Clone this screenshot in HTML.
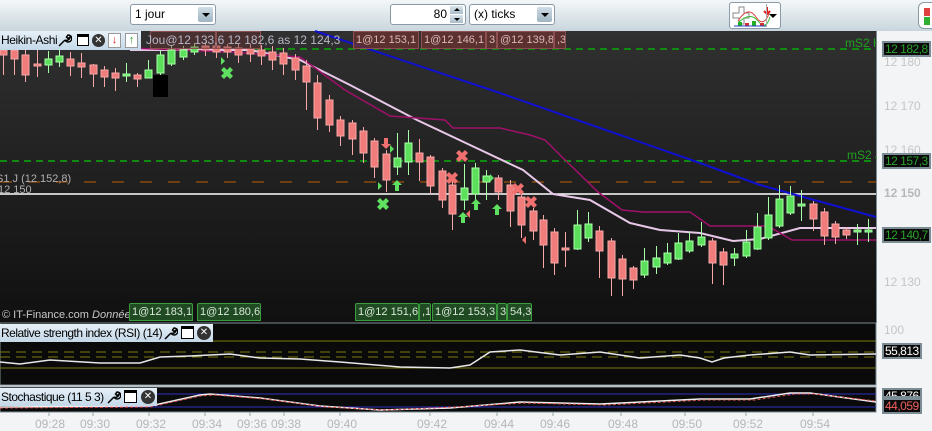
<!DOCTYPE html>
<html><head><meta charset="utf-8"><style>
*{margin:0;padding:0;box-sizing:border-box}
body{width:932px;height:429px;overflow:hidden;background:#f2f4f5;font-family:"Liberation Sans",sans-serif;position:relative}
.abs{position:absolute}
.tb{left:0;top:0;width:932px;height:31px;background:linear-gradient(#f4f7f8,#c9d6dd)}
.dd{background:#fff;border:1px solid #8a9aa6;border-radius:3px;font-size:12px;color:#000;height:21px;top:4px;line-height:19px;padding-left:4px}
.btn{position:absolute;right:2px;top:2px;width:15px;height:15px;background:linear-gradient(#cfdde6,#9fb4c2);border-radius:2px}
.btn:after{content:"";position:absolute;left:4px;top:6px;border-left:4px solid transparent;border-right:4px solid transparent;border-top:4px solid #000}
.hdr{background:linear-gradient(#e6f0f8,#c4d8e8);font-size:11px;color:#000;line-height:18px;padding-left:1px;white-space:nowrap}
.lbl{font-size:11px;line-height:16px;height:18px;padding:0 2px;white-space:nowrap;overflow:hidden}
.rl{background:rgba(110,50,50,.75);border:1px solid #8c5050;color:#d9b8b8;top:31px}
.gl{background:#1f4a22;border:1px solid #3c9a3f;color:#d8e8d8;top:303px;border-radius:2px 2px 0 0}
.ax{font-size:12px;color:#c6c6c6;left:884px;white-space:nowrap}
.vb{left:882px;background:#0a0a0a;border:2px solid #7c8c94;font-size:12px;line-height:12px;padding:0 1px;color:#2aa02a;white-space:nowrap;letter-spacing:-0.5px}
.t{font-size:12px;color:#b6b6b6;top:417px}
.wr{position:absolute;width:14px;height:14px}
</style></head><body>
<div class="abs tb"></div>
<div class="abs dd" style="left:130px;width:86px">1 jour<div class="btn"></div></div>
<div class="abs dd" style="left:390px;width:76px;text-align:right;padding-right:18px">80<div class="abs" style="right:2px;top:1px;width:13px;height:8px;background:linear-gradient(#d8e4ea,#aabdc9)"></div><div class="abs" style="right:2px;top:10px;width:13px;height:8px;background:linear-gradient(#d8e4ea,#aabdc9)"></div><div class="abs" style="right:5px;top:3px;border-left:3px solid transparent;border-right:3px solid transparent;border-bottom:3px solid #000"></div><div class="abs" style="right:5px;top:13px;border-left:3px solid transparent;border-right:3px solid transparent;border-top:3px solid #000"></div></div>
<div class="abs dd" style="left:469px;width:86px">(x) ticks<div class="btn"></div></div>
<div class="abs" style="left:729px;top:2px;width:52px;height:27px;background:#fff;border:1px solid #8a9aa6;border-radius:3px">
<svg width="50" height="25"><path d="M3 10h6v-6h5v6h5v5h-5v6h-5v-6h-6z" fill="#fff" stroke="#888"/><path d="M8 18 Q18 2 26 14 T40 8" stroke="#e04040" fill="none"/><path d="M8 20 Q20 8 28 18 T40 14" stroke="#30c030" fill="none"/><rect x="8" y="19" width="4" height="4" fill="#20b020"/><rect x="22" y="18" width="4" height="5" fill="#20b020"/><rect x="15" y="20" width="4" height="3" fill="#d03030"/><rect x="30" y="20" width="4" height="3" fill="#d03030"/><path d="M4 23h32" stroke="#2040c0"/><path d="M37 4v6M34 8l3 3 3-3" stroke="#e02020" stroke-width="2" fill="none"/></svg></div>
<div class="abs" style="left:766px;top:4px;width:14px;height:23px;border-left:1px solid #aaa"></div>
<div class="abs" style="left:769px;top:14px;border-left:4px solid transparent;border-right:4px solid transparent;border-top:4px solid #000"></div>
<div class="abs" style="left:918px;top:2px;width:20px;height:27px;background:#fff;border:1px solid #8a9aa6;border-radius:6px"></div>
<div class="abs" style="left:924px;top:8px;width:6px;height:8px;background:#e04040"></div>
<div class="abs" style="left:924px;top:17px;width:6px;height:8px;background:#30b030"></div>

<svg class="abs" style="left:0;top:31px" width="877" height="292">
<defs><linearGradient id="bg" x1="0" y1="0" x2="0" y2="1"><stop offset="0" stop-color="#303030"/><stop offset="1" stop-color="#101010"/></linearGradient></defs>
<rect width="877" height="292" fill="url(#bg)"/>
<rect x="876" width="1" height="292" fill="#7c8c94"/>
</svg>
<svg class="abs" style="left:0;top:0" width="877" height="322">
<g stroke-width="2">
<line x1="0" y1="49" x2="876" y2="49" stroke="#108a10" stroke-dasharray="7 5"/>
<line x1="0" y1="161" x2="876" y2="161" stroke="#108a10" stroke-dasharray="7 5"/>
<line x1="0" y1="182" x2="876" y2="182" stroke="#8a4a10" stroke-width="1.5" stroke-dasharray="12 16"/>
</g>
<line x1="0" y1="194" x2="876" y2="194" stroke="#fff" stroke-width="1.5"/>
<polyline points="315,31 500,93 700,163 760,185 876,217" fill="none" stroke="#1010d0" stroke-width="2"/>
<polyline points="130,50 250,50 300,60 350,85 417,120 470,145 523,170 553,194 590,200 630,223 660,230 700,233 733,241 760,239 800,228 876,228" fill="none" stroke="#e8c8e8" stroke-width="2"/>
<polyline points="130,48 230,52 300,57 345,90 390,116 445,120 453,128 500,128 530,135 545,140 560,155 598,192 622,210 643,212 690,212 710,226 768,226 792,240 876,240" fill="none" stroke="#a0106a" stroke-width="1.5"/>
<rect x="153" y="75" width="15" height="22" fill="#000"/>
<g id="c" stroke-width="1"></g>
<g font-size="12" fill="#20a020"><text x="845" y="47">mS2 H</text><text x="847" y="159">mS2 J</text></g>
<text x="-4" y="182" font-size="11" fill="#b0b0b0">S1 J (12 152,8)</text>
<text x="-2" y="193" font-size="11" fill="#b0b0b0">12 150</text>
<text x="2" y="318" font-size="11" fill="#c8c8c8">© IT-Finance.com <tspan font-style="italic">Données indicatives</tspan></text>
<g fill="#60e060"><path d="M224 68l3 3 3-3 3 3-3 3 3 3-3 3-3-3-3 3-3-3 3-3-3-3z" transform="translate(0,-1)"/><path d="M380 198l3 3 3-3 3 3-3 3 3 3-3 3-3-3-3 3-3-3 3-3-3-3z"/>
<path d="M397 180l5 5h-3v6h-4v-6h-3z"/><path d="M463 212l5 5h-3v6h-4v-6h-3z"/><path d="M476 199l5 5h-3v6h-4v-6h-3z"/><path d="M497 204l5 5h-3v6h-4v-6h-3z"/>
<path d="M378 182v8l4-4z"/><path d="M390 145v8l4-4z"/><path d="M490 174v8l4-4z"/><path d="M221 57v8l4-4z"/></g>
<g fill="#f07070"><path d="M459 150l3 3 3-3 3 3-3 3 3 3-3 3-3-3-3 3-3-3 3-3-3-3z"/><path d="M449 172l3 3 3-3 3 3-3 3 3 3-3 3-3-3-3 3-3-3 3-3-3-3z"/><path d="M515 183l3 3 3-3 3 3-3 3 3 3-3 3-3-3-3 3-3-3 3-3-3-3z"/><path d="M528 196l3 3 3-3 3 3-3 3 3 3-3 3-3-3-3 3-3-3 3-3-3-3z"/>
<path d="M386 149l5-5h-3v-6h-4v6h-3z"/><path d="M526 236v8l-4-4z"/><path d="M470 210v8l-4-4z"/></g>
</svg>
<script>
var d=[["R",3,50,55,46,75],["R",14,50,59,46,75],["R",25,55,75,50,82],["R",37,64,66,50,77],["G",48,59,65,51,73],["G",59,56,62,50,67],["R",70,59,66,52,76],["R",81,63,67,53,78],["R",93,65,74,64,87],["R",104,70,77,66,87],["R",115,73,78,68,91],["G",126,74,76,63,82],["R",137,75,79,73,87],["G",148,70,78,60,78],["G",160,55,73,50,75],["G",171,50,64,45,66],["G",183,50,57,46,60],["G",194,47,52,43,55],["R",205,46,50,42,56],["R",216,46,52,42,58],["R",227,47,52,44,58],["R",238,48,55,44,63],["R",250,49,54,44,62],["R",261,50,56,45,65],["R",272,52,60,46,70],["R",283,53,64,48,75],["R",295,58,70,54,80],["R",306,66,82,60,110],["R",317,83,118,75,130],["R",329,100,125,95,132],["R",340,120,136,116,146],["R",352,123,139,120,155],["R",363,131,153,127,163],["R",374,141,167,138,178],["R",386,154,180,150,192],["G",397,158,167,133,175],["G",408,143,162,130,175],["R",419,153,162,139,181],["R",430,157,186,155,194],["R",442,171,200,168,208],["R",452,185,214,180,230],["G",464,188,200,164,210],["G",475,168,194,163,200],["G",486,176,182,170,200],["R",498,178,192,175,200],["R",510,185,211,180,227],["R",521,197,225,193,238],["R",533,211,231,208,240],["R",543,220,245,215,268],["R",554,232,263,228,275],["R",565,248,250,232,267],["G",577,225,249,210,250],["G",588,224,238,212,242],["R",599,231,251,226,278],["R",611,241,278,238,296],["R",622,259,279,255,296],["R",633,268,280,266,289],["G",644,261,275,248,278],["G",656,258,267,246,274],["G",667,253,263,243,265],["G",678,243,259,233,260],["G",689,241,251,232,253],["G",701,237,245,222,247],["R",712,241,263,238,284],["R",723,252,265,248,285],["G",734,254,258,248,266],["G",746,242,256,230,258],["G",757,227,249,213,250],["G",768,215,238,197,240],["G",779,199,226,185,228],["G",790,196,213,186,215],["G",801,204,206,190,221],["R",813,204,219,201,231],["R",824,212,236,208,245],["R",835,224,237,221,244],["R",846,230,235,227,239],["G",857,230,232,224,245],["G",868,230,232,219,242]];
var s="";d.forEach(function(c){var f=c[0]=="R"?"#f07c7c":"#5ce05c",k=c[0]=="R"?"#f8a8a8":"#a8ffa8";s+='<line x1="'+(c[1]+.5)+'" y1="'+c[4]+'" x2="'+(c[1]+.5)+'" y2="'+c[5]+'" stroke="'+k+'"/><rect x="'+(c[1]-3)+'" y="'+c[2]+'" width="7" height="'+Math.max(2,c[3]-c[2])+'" fill="'+f+'" stroke="'+k+'"/>';});
document.getElementById("c").innerHTML=s;
</script>
<div class="abs hdr" style="left:0;top:31px;width:141px;height:19px;font-size:12px;letter-spacing:-0.4px">Heikin-Ashi</div>
<svg class="wr" style="left:58px;top:33px" viewBox="0 0 14 14"><path d="M1 13l6-6M7 7a3.5 3.5 0 1 0 3-5l-1.5 2 1.5 1.5 2-1.5a3.5 3.5 0 0 1-5 3" fill="none" stroke="#000" stroke-width="1.5"/></svg>
<div class="abs" style="left:77px;top:34px;width:12px;height:12px;border:1px solid #000;border-top:3px solid #000;background:#fff"></div>
<div class="abs" style="left:92px;top:34px;width:13px;height:13px;border-radius:50%;background:#333;color:#fff;font-size:10px;line-height:13px;text-align:center">✕</div>
<div class="abs" style="left:108px;top:33px;width:13px;height:15px;background:#fff;border:1px solid #999;color:#e02020;font-size:11px;text-align:center;line-height:13px">↓</div>
<div class="abs" style="left:125px;top:33px;width:13px;height:15px;background:#fff;border:1px solid #999;color:#20a020;font-size:11px;text-align:center;line-height:13px;font-weight:bold">↑</div>
<div class="abs lbl rl" style="left:150px;width:66px;background:rgba(110,50,50,.4)"></div>
<div class="abs lbl rl" style="left:216px;width:45px;background:rgba(110,50,50,.4)"></div>
<div class="abs" style="left:146px;top:33px;font-size:12px;color:#b8b8c8;white-space:nowrap">Jou@12 133,6 12 182,6 as 12 124,3</div>
<div class="abs lbl rl" style="left:353px;width:66px">1@12 153,1</div>
<div class="abs lbl rl" style="left:421px;width:65px">1@12 146,1</div>
<div class="abs lbl rl" style="left:486px;width:11px">3</div>
<div class="abs lbl rl" style="left:497px;width:57px">@12 139,8</div>
<div class="abs lbl rl" style="left:554px;width:12px">,3</div>
<div class="abs lbl gl" style="left:129px;width:64px">1@12 183,1</div>
<div class="abs lbl gl" style="left:197px;width:64px">1@12 180,6</div>
<div class="abs lbl gl" style="left:355px;width:64px">1@12 151,6</div>
<div class="abs lbl gl" style="left:419px;width:12px">,1</div>
<div class="abs lbl gl" style="left:432px;width:65px">1@12 153,3</div>
<div class="abs lbl gl" style="left:497px;width:10px">3</div>
<div class="abs lbl gl" style="left:507px;width:25px">54,3</div>

<div class="abs ax" style="top:55px">12 180</div>
<div class="abs ax" style="top:99px">12 170</div>
<div class="abs ax" style="top:143px">12 160</div>
<div class="abs ax" style="top:186px;font-weight:bold;color:#b8b8b8">12 150</div>
<div class="abs ax" style="top:275px">12 130</div>
<div class="abs vb" style="top:41px">12 182,8</div>
<div class="abs vb" style="top:153px">12 157,3</div>
<div class="abs vb" style="top:227px">12 140,7</div>

<svg class="abs" style="left:0;top:322px" width="877" height="91">
<rect x="0" y="1" width="876" height="62" fill="#0a0a0a" stroke="#7c8c94"/>
<g stroke="#7a7a10"><line x1="0" y1="19" x2="876" y2="19"/><line x1="0" y1="30" x2="876" y2="30" stroke-dasharray="10 6"/><line x1="0" y1="35" x2="876" y2="35" stroke-dasharray="10 6"/><line x1="0" y1="46" x2="876" y2="46"/></g>
<polyline points="0,40 20,42 50,38 100,41 140,41 160,35 190,34 230,32 260,36 300,37 340,40 400,45 450,46 470,43 490,30 520,28 560,33 600,30 640,36 680,33 700,36 712,40 724,36 750,33 790,30 810,33 876,32" fill="none" stroke="#e8e8e8" stroke-width="1.5"/>
<rect x="0" y="65" width="876" height="25" fill="#0a0a0a" stroke="#7c8c94"/>
<g stroke="#3030c0"><line x1="0" y1="72" x2="876" y2="72"/><line x1="0" y1="85" x2="876" y2="85"/></g>
<polyline points="0,85 150,84 200,73 210,72 260,76 320,84 380,88 450,86 520,80 600,82 700,77 750,77 790,71 810,71 876,80" fill="none" stroke="#f0f0f0" stroke-width="1.5"/>
<polyline points="0,86 150,85 200,74 215,73 265,77 325,85 385,88 455,85 525,81 605,83 705,78 755,78 795,72 815,72 876,79" fill="none" stroke="#e05050" stroke-dasharray="3 2"/>
</svg>
<div class="abs hdr" style="left:0;top:324px;width:213px;height:18px;font-size:12px;letter-spacing:-0.5px">Relative strength index (RSI) (14)</div>
<svg class="wr" style="left:164px;top:326px" viewBox="0 0 14 14"><path d="M1 13l6-6M7 7a3.5 3.5 0 1 0 3-5l-1.5 2 1.5 1.5 2-1.5a3.5 3.5 0 0 1-5 3" fill="none" stroke="#000" stroke-width="1.5"/></svg>
<div class="abs" style="left:181px;top:326px;width:13px;height:13px;border:1px solid #000;border-top:3px solid #000;background:#fff"></div>
<div class="abs" style="left:197px;top:326px;width:14px;height:14px;border-radius:50%;background:#333;color:#fff;font-size:10px;line-height:14px;text-align:center">✕</div>
<div class="abs hdr" style="left:0;top:388px;width:157px;height:18px;font-size:12px;letter-spacing:-0.5px">Stochastique (11 5 3)</div>
<svg class="wr" style="left:107px;top:390px" viewBox="0 0 14 14"><path d="M1 13l6-6M7 7a3.5 3.5 0 1 0 3-5l-1.5 2 1.5 1.5 2-1.5a3.5 3.5 0 0 1-5 3" fill="none" stroke="#000" stroke-width="1.5"/></svg>
<div class="abs" style="left:124px;top:390px;width:13px;height:13px;border:1px solid #000;border-top:3px solid #000;background:#fff"></div>
<div class="abs" style="left:141px;top:390px;width:14px;height:14px;border-radius:50%;background:#333;color:#fff;font-size:10px;line-height:14px;text-align:center">✕</div>
<div class="abs ax" style="top:323px">100</div>
<div class="abs vb" style="top:343px;color:#fff">55,813</div>
<div class="abs vb" style="top:388px;color:#fff;height:10px;overflow:hidden">45,876</div>
<div class="abs vb" style="top:398px;color:#f06060">44,059</div>
<svg class="abs" style="left:0;top:412px" width="877" height="6"><g stroke="#9aa"><path d="M49 0v4M93 0v4M149 0v4M205 0v4M250 0v4M284 0v4M340 0v4M430 0v4M497 0v4M553 0v4M621 0v4M685 0v4M746 0v4M813 0v4"/></g></svg>
<div class="abs t" style="left:35px">09:28</div><div class="abs t" style="left:80px">09:30</div><div class="abs t" style="left:136px">09:32</div><div class="abs t" style="left:192px">09:34</div><div class="abs t" style="left:237px">09:36</div><div class="abs t" style="left:271px">09:38</div><div class="abs t" style="left:327px">09:40</div><div class="abs t" style="left:417px">09:42</div><div class="abs t" style="left:484px">09:44</div><div class="abs t" style="left:540px">09:46</div><div class="abs t" style="left:608px">09:48</div><div class="abs t" style="left:672px">09:50</div><div class="abs t" style="left:733px">09:52</div><div class="abs t" style="left:800px">09:54</div>
</body></html>
